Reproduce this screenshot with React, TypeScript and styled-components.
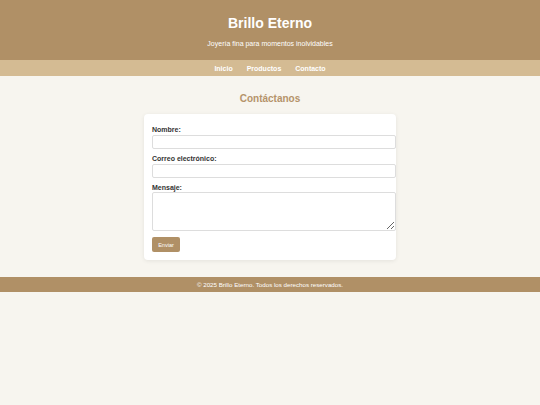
import React from "react";
import styled, { createGlobalStyle } from "styled-components";

const GlobalStyle = createGlobalStyle`
  html, body {
    margin: 0;
    padding: 0;
    background-color: #f7f5ef;
    font-family: "Liberation Sans", Arial, sans-serif;
    color: #333;
  }
`;

const Header = styled.header`
  background-color: #b09066;
  color: #fff;
  text-align: center;
  height: 60px;
  display: flex;
  flex-direction: column;
  align-items: center;
  padding-top: 15px;
  box-sizing: border-box;
`;

const Title = styled.h1`
  margin: 0;
  font-size: 14px;
  line-height: 17px;
  font-weight: 700;
`;

const Tagline = styled.p`
  margin: 7px 0 0;
  font-size: 7px;
  line-height: 9px;
`;

const Nav = styled.nav`
  background-color: #d4bb93;
  height: 16px;
  display: flex;
  justify-content: center;
  align-items: center;
  gap: 14px;
`;

const NavLink = styled.a`
  color: #fff;
  font-size: 7px;
  font-weight: 700;
  text-decoration: none;
`;

const Main = styled.main`
  display: flex;
  flex-direction: column;
  align-items: center;
  padding: 17px 0 17px;
`;

const Heading = styled.h2`
  margin: 0 0 9px;
  color: #b5936a;
  font-size: 10px;
  line-height: 12px;
  font-weight: 700;
`;

const Card = styled.form`
  width: 252px;
  box-sizing: border-box;
  background-color: #fff;
  border-radius: 4px;
  box-shadow: 0 1px 4px rgba(0, 0, 0, 0.08);
  padding: 11px 8px 8px;
  display: flex;
  flex-direction: column;
`;

const Label = styled.label`
  display: block;
  font-size: 7px;
  line-height: 9px;
  font-weight: 700;
  color: #333;
`;

const Input = styled.input`
  display: block;
  width: 100%;
  height: 6px;
  padding: 3px;
  border: 1px solid #ddd;
  border-radius: 2px;
  margin: 1px 0 5px;
  font-size: 7px;
  font-family: inherit;
  background: #fff;
  outline: none;
`;

const TextArea = styled.textarea`
  display: block;
  width: 100%;
  height: 31px;
  padding: 3px;
  border: 1px solid #ddd;
  border-radius: 2px;
  margin: 0 0 6px;
  font-size: 7px;
  font-family: inherit;
  background: #fff;
  outline: none;
`;

const Button = styled.button`
  align-self: flex-start;
  width: 28px;
  height: 15px;
  padding: 0;
  border: none;
  border-radius: 2px;
  background-color: #b09066;
  color: #fff;
  font-size: 5.5px;
  font-family: inherit;
  cursor: pointer;
`;

const Footer = styled.footer`
  background-color: #b09066;
  color: #fff;
  height: 15px;
  display: flex;
  align-items: center;
  justify-content: center;
  font-size: 6.2px;
`;

const App: React.FC = () => {
  return (
    <>
      <GlobalStyle />
      <Header>
        <Title>Brillo Eterno</Title>
        <Tagline>Joyería fina para momentos inolvidables</Tagline>
      </Header>
      <Nav>
        <NavLink href="#">Inicio</NavLink>
        <NavLink href="#">Productos</NavLink>
        <NavLink href="#">Contacto</NavLink>
      </Nav>
      <Main>
        <Heading>Contáctanos</Heading>
        <Card onSubmit={(e) => e.preventDefault()}>
          <Label htmlFor="nombre">Nombre:</Label>
          <Input id="nombre" type="text" />
          <Label htmlFor="correo">Correo electrónico:</Label>
          <Input id="correo" type="email" />
          <Label htmlFor="mensaje">Mensaje:</Label>
          <TextArea id="mensaje" />
          <Button type="submit">Enviar</Button>
        </Card>
      </Main>
      <Footer>© 2025 Brillo Eterno. Todos los derechos reservados.</Footer>
    </>
  );
};

export default App;
